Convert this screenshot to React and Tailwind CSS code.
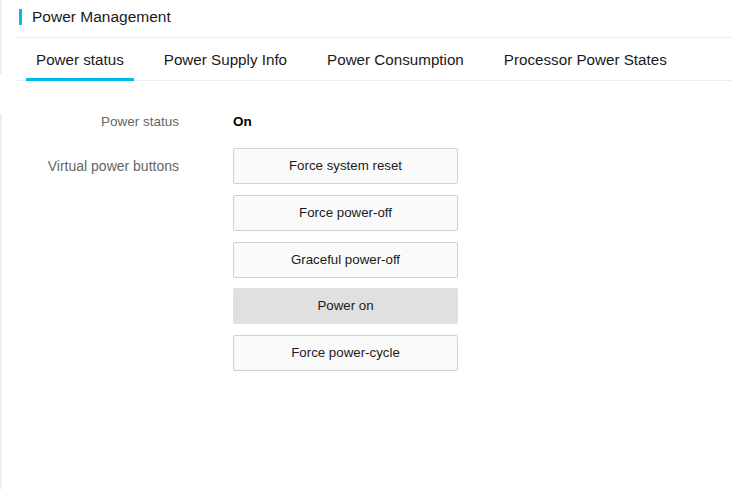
import { useState } from 'react';

const TABS = ['Power status', 'Power Supply Info', 'Power Consumption', 'Processor Power States'];
const ACTIONS = ['Force system reset', 'Force power-off', 'Graceful power-off', 'Power on', 'Force power-cycle'];

export default function App() {
  const [tab, setTab] = useState(0);

  return (
    <div className="flex min-h-[489px] w-[732px] bg-white font-['Liberation_Sans',Arial,sans-serif] text-[#222]">
      {/* thin left strip */}
      <div className="flex w-[2px] flex-col">
        <div className="h-[74px] bg-[#efeef7]" />
        <div className="h-[40px]" />
        <div className="flex-1 bg-[#efeef7]" />
      </div>

      <div className="flex flex-1 flex-col pl-[14px]">
        <div className="flex h-[38px] items-center border-b border-[#ececf5] pb-[4px]">
          <span className="ml-[3px] h-[16px] w-[3px] bg-[#00b9f1]" />
          <span className="ml-[10px] text-[15.5px] text-[#1a1a1a]">Power Management</span>
        </div>

        <div className="flex h-[43px] gap-[20px] border-b border-[#ececf5] pl-[10px]">
          {TABS.map((t, i) => (
            <button
              key={t}
              onClick={() => setTab(i)}
              className={`-mb-px flex items-center border-b-[3px] px-[10px] pt-[4px] text-[15.2px] text-[#1a1a1a] ${
                tab === i ? 'border-[#00b9f1]' : 'border-transparent'
              }`}
            >
              {t}
            </button>
          ))}
        </div>

        <div className="grid grid-cols-[163px_1fr] gap-x-[54px] pt-[32px]">
          <div className="text-right text-[13.5px] leading-[18px] text-[#666]">Power status</div>
          <div className="text-[13.5px] font-bold leading-[18px] text-black">On</div>

          <div className="mt-[17px] flex h-[36px] items-center justify-end text-[14px] text-[#666]">
            Virtual power buttons
          </div>
          <div className="mt-[17px] flex w-[225px] flex-col gap-[10.75px]">
            {ACTIONS.map((a) => (
              <button
                key={a}
                className={`h-[36px] rounded-[2px] border text-[13.3px] text-[#1a1a1a] ${
                  a === 'Power on' ? 'border-[#e0e0e0] bg-[#e0e0e0]' : 'border-[#cfcfdc] bg-[#fafafa]'
                }`}
              >
                {a}
              </button>
            ))}
          </div>
        </div>
      </div>
    </div>
  );
}
